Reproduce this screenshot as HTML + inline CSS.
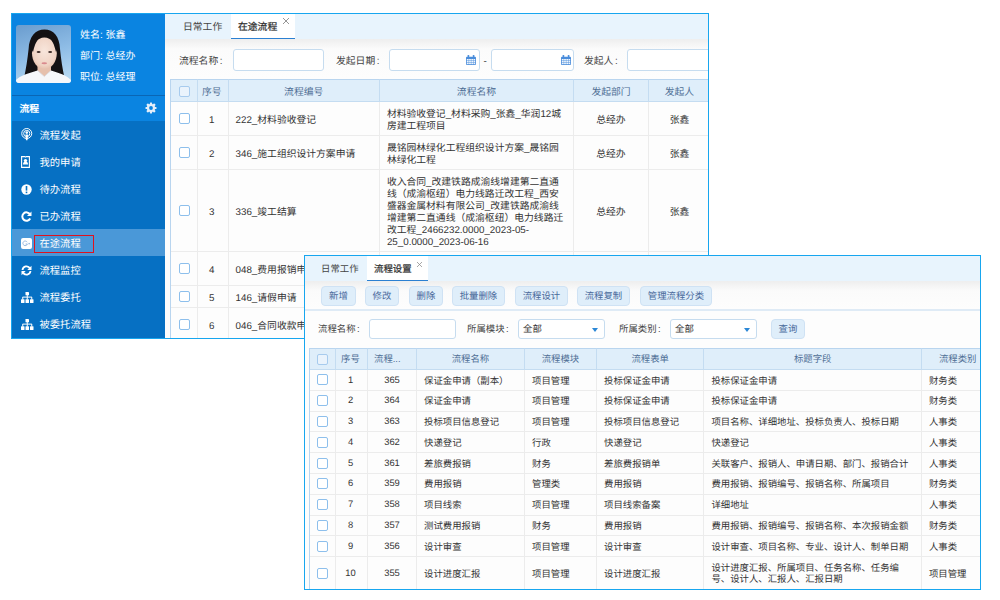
<!DOCTYPE html>
<html lang="zh-CN">
<head>
<meta charset="utf-8">
<style>
*{box-sizing:border-box;margin:0;padding:0}
html,body{width:1000px;height:600px;overflow:hidden;background:#fff;font-family:"Liberation Sans",sans-serif;color:#333;text-rendering:geometricPrecision}
.abs{position:absolute}
/* frame 1 */
#f1{position:absolute;left:11px;top:13px;width:698px;height:326px;border:1px solid #17a6ef;overflow:hidden;background:#fafafa}
#side{position:absolute;left:0;top:0;width:153px;height:324px;background:#0670c3;color:#fff}
#prof{position:absolute;left:0;top:0;width:153px;height:82px;background:#0a84e1;border-bottom:1px solid #0a66b5}
#photo{position:absolute;left:4px;top:11px;width:55px;height:58px;border-radius:3px;overflow:hidden}
.pl{position:absolute;left:68px;font-size:10px;line-height:12px;color:#fff;white-space:nowrap}
#shd{position:absolute;left:0;top:82px;width:153px;height:25px;background:#0a84e1}
#shd .t{position:absolute;left:7.5px;top:8px;font-size:9.8px;line-height:12px;font-weight:bold}
.mi{position:absolute;left:0;width:153px;height:27px;font-size:10px;line-height:12px;white-space:nowrap}
.mi .tx{position:absolute;left:27.5px;top:10px;font-size:10.3px}
.mi .ic{position:absolute;left:9px;top:9px;width:11px;height:11px}
.mi.on{background:#4a98d8}
/* window 1 content */
#w1 .lbl,#w1 table{font-size:9.8px}
#w1 .lbl{margin-top:1px}
#w1{position:absolute;left:153px;top:0;width:545px;height:324px;background:#fdfdfd}
.tabbar{position:absolute;left:0;top:0;width:100%;height:25px;background:#e8f4fd}
.tab{position:absolute;top:0;height:25px;font-size:9.8px;line-height:12px;white-space:nowrap;color:#444}
.tab.on{background:#fff;border-bottom:2px solid #2b80d2;color:#1a1a1a;height:26px;-webkit-text-stroke:.25px #444}
.tab .x{position:absolute;top:4px;width:6px;height:6px}
.srch{position:absolute;left:0;top:25px;width:100%;height:40px;background:linear-gradient(#eeeeee,#fbfbfb 10px,#fdfdfd)}
.lbl{position:absolute;font-size:10px;line-height:12px;color:#444;white-space:nowrap}
.inp{position:absolute;background:#fff;border:1px solid #c6dcef;border-radius:3px}
table{border-collapse:separate;border-spacing:0;table-layout:fixed;position:absolute;font-size:10px;line-height:12px;color:#333;border-left:1px solid #b9d5ef}
th{background:#dfeefa;color:#4f6f95;font-weight:normal;border-right:1px solid #c4dcf1;border-top:1px solid #b9d5ef;border-bottom:1px solid #c4dcf1;text-align:center;white-space:nowrap;overflow:hidden;padding:0}
td{border-right:1px solid #ececec;border-bottom:1px solid #ececec;background:#fdfdfd;text-align:center;padding:0 7px;overflow:hidden;white-space:nowrap}
td.l{text-align:left}
td:first-child,th:first-child{padding:0}
.ck{display:block;margin:0 auto;width:11px;height:11px;border:1px solid #8dbfec;border-radius:2px;background:#fff}
th .ck{border-color:#a7cbee;background:#eaf3fc}
/* window 2 */
#f2 .lbl,#f2 .btn,#f2 .sel,#f2 table,#f2 .tab{font-size:9.4px}
#f2 table{line-height:10.8px}
#t1 td{padding-top:5px}#t1 th{padding-top:4px}#t2 td{padding-top:2px}#t2 th{padding-top:1px}
#t1 td:first-child,#t2 td:first-child,#t1 th:first-child,#t2 th:first-child{padding:0}
#t1 th:first-child{padding-top:2px}
#t1 td:nth-child(2),#t2 td:nth-child(2){padding-left:0;padding-right:2px}#t2 td:nth-child(2),#t2 td:nth-child(3){padding-top:0}#t1 th:nth-child(2),#t2 th:nth-child(2){padding-right:2px}
#f2{position:absolute;left:304px;top:255px;width:677px;height:335px;border:1px solid #17a6ef;overflow:hidden;background:#fdfdfd}
.btn{position:absolute;top:30px;height:20px;background:#dfeefa;border:1px solid #cfe2f4;border-radius:4px;color:#48699a;font-size:10px;line-height:18px;text-align:center;white-space:nowrap}
.sel{position:absolute;background:#fff;border:1px solid #c6dcef;border-radius:3px;font-size:10px;line-height:18px;padding-left:4px;color:#333}
.sel:after{content:"";position:absolute;right:6px;top:7.5px;border-left:3.5px solid transparent;border-right:3.5px solid transparent;border-top:4px solid #2b87d6}
</style>
</head>
<body>
<div id="f1">
  <div id="side">
    <div id="prof">
      <div id="photo">
        <svg width="55" height="58" viewBox="0 0 55 58">
          <defs><linearGradient id="pg" x1="0.2" y1="0" x2="0.5" y2="1"><stop offset="0" stop-color="#6d9fd0"/><stop offset="0.55" stop-color="#8fbde6"/><stop offset="1" stop-color="#b3d6f1"/></linearGradient>
          <radialGradient id="fg" cx="0.5" cy="0.42" r="0.62"><stop offset="0" stop-color="#f8e6dc"/><stop offset="0.75" stop-color="#f0d3c4"/><stop offset="1" stop-color="#e2baa6"/></radialGradient></defs>
          <rect width="55" height="58" fill="url(#pg)"/>
          <path d="M8 53 C10 44 11.5 34 12.6 24 C13.2 11.5 19.5 4.5 28.5 4.5 C37.5 4.5 43.6 11.5 44 24 C45 34 46.5 44 48.5 53 Z" fill="#141113"/>
          <rect x="21.5" y="36" width="13.5" height="17" fill="#e6c0ad"/>
          <ellipse cx="28.4" cy="28.3" rx="12.4" ry="15.8" fill="url(#fg)"/>
          <path d="M15.2 24 C15 14 20 8.5 28.5 8.2 C24.5 10.5 19.5 15 17 27 Z" fill="#141113"/>
          <path d="M41.6 24 C41.8 14 37 8.5 28.5 8.2 C32.5 10.5 37.5 15 40 27 Z" fill="#141113"/>
          <ellipse cx="22.6" cy="27" rx="2" ry="1.1" fill="#3e2d29"/>
          <ellipse cx="34.2" cy="27" rx="2" ry="1.1" fill="#3e2d29"/>
          <ellipse cx="28.3" cy="38.2" rx="2.8" ry="1" fill="#d98a8e"/>
          <path d="M0 58 L0 55 C4 50.5 13 48 21.5 45.5 L28.3 51.5 L35 45.5 C43.5 48 51 50.5 55 55 L55 58 Z" fill="#f6f7fa"/>
          <path d="M21.5 45.5 L28.3 51.5 L35 45.5" fill="none" stroke="#d9dae2" stroke-width="0.8"/>
        </svg>
      </div>
      <div class="pl" style="top:16px">姓名: 张鑫</div>
      <div class="pl" style="top:37px">部门: 总经办</div>
      <div class="pl" style="top:58px">职位: 总经理</div>
    </div>
    <div id="shd"><div class="t">流程</div>
      <svg class="abs" style="left:133px;top:6px" width="12" height="12" viewBox="0 0 12 12"><g fill="#e3eefa"><circle cx="6" cy="6" r="4.1"/><rect x="4.9" y=".5" width="2.2" height="11" rx=".4"/><rect x="4.9" y=".5" width="2.2" height="11" rx=".4" transform="rotate(45 6 6)"/><rect x="4.9" y=".5" width="2.2" height="11" rx=".4" transform="rotate(90 6 6)"/><rect x="4.9" y=".5" width="2.2" height="11" rx=".4" transform="rotate(135 6 6)"/></g><circle cx="6" cy="6" r="1.9" fill="#0a84e1"/></svg>
    </div>
    <div class="mi" style="top:107px"><svg class="ic" style="width:11.5px;height:12.5px;top:7.3px" viewBox="0 0 11.5 12.5"><circle cx="5.75" cy="5.5" r="5" fill="none" stroke="#fff" stroke-width="1"/><circle cx="5.75" cy="5.5" r="3.1" fill="none" stroke="#fff" stroke-width="1"/><circle cx="5.75" cy="4.6" r="1.3" fill="#fff"/><path d="M4.4 6.5 H7.1 L6.5 12.3 H5 Z" fill="#fff"/></svg><span class="tx">流程发起</span></div>
    <div class="mi" style="top:134px"><svg class="ic" style="width:9px;height:12px;top:7.5px" viewBox="0 0 9 12"><path d="M.6 .6 H3.8 L4.5 1.1 L5.2 .6 H8.4 V11.4 H.6 Z" fill="none" stroke="#fff" stroke-width="1.1"/><circle cx="4.5" cy="4.6" r="1.7" fill="#fff"/><path d="M2 8.6 C2 6.3 3 5.6 4.5 5.6 C6 5.6 7 6.3 7 8.6 Z" fill="#fff"/></svg><span class="tx">我的申请</span></div>
    <div class="mi" style="top:161px"><svg class="ic" viewBox="0 0 11 11"><circle cx="5.5" cy="5.5" r="5.2" fill="#fff"/><rect x="4.7" y="2" width="1.6" height="4.6" fill="#0670c3"/><rect x="4.7" y="7.6" width="1.6" height="1.6" fill="#0670c3"/></svg><span class="tx">待办流程</span></div>
    <div class="mi" style="top:188px"><svg class="ic" viewBox="0 0 11 11"><path d="M9 3.2 A4.2 4.2 0 1 0 9.2 7.6" fill="none" stroke="#fff" stroke-width="2"/><path d="M10.5 0.5 L10.5 5 L6 5Z" fill="#fff"/></svg><span class="tx">已办流程</span></div>
    <div class="mi on" style="top:215px"><svg class="ic" style="width:11px;height:11px;top:9px" viewBox="0 0 11 11"><rect x="0" y="0" width="11" height="11" rx="2" fill="#fff"/><path d="M6.2 4.2 A2.3 2.3 0 1 0 6.4 6 H4.6" fill="none" stroke="#8fb3dc" stroke-width=".9"/><rect x="7.5" y="5.1" width="1.4" height="1" fill="#9ab9de"/><rect x="7.7" y="4.9" width="1" height="1.4" fill="#9ab9de"/></svg><span class="tx">在途流程</span>
      <div class="abs" style="left:22px;top:5.5px;width:60px;height:18px;border:1px solid #e0121e"></div></div>
    <div class="mi" style="top:242px"><svg class="ic" viewBox="0 0 11 11"><path d="M1.5 5 A4 4 0 0 1 9 3.5" fill="none" stroke="#fff" stroke-width="1.8"/><path d="M10.5 .8 L10.5 5 L6.3 5Z" fill="#fff"/><path d="M9.5 6 A4 4 0 0 1 2 7.5" fill="none" stroke="#fff" stroke-width="1.8"/><path d="M.5 10.2 L.5 6 L4.7 6Z" fill="#fff"/></svg><span class="tx">流程监控</span></div>
    <div class="mi" style="top:269px"><svg class="ic" style="width:12.5px;height:11px;top:9px" viewBox="0 0 12.5 11"><rect x="4.5" y="0" width="3.5" height="3.3" rx=".4" fill="#fff"/><rect x="1.6" y="4.6" width="9.3" height="1" fill="#fff"/><rect x="5.75" y="3" width="1" height="2" fill="#fff"/><rect x="0" y="7.3" width="3.5" height="3.7" rx=".5" fill="#fff"/><rect x="4.5" y="7.3" width="3.5" height="3.7" rx=".5" fill="#fff"/><rect x="9" y="7.3" width="3.5" height="3.7" rx=".5" fill="#fff"/><rect x="1.25" y="5" width="1" height="2.5" fill="#fff"/><rect x="5.75" y="5" width="1" height="2.5" fill="#fff"/><rect x="10.25" y="5" width="1" height="2.5" fill="#fff"/></svg><span class="tx">流程委托</span></div>
    <div class="mi" style="top:296px"><svg class="ic" style="width:12.5px;height:11px;top:9px" viewBox="0 0 12.5 11"><rect x="4.5" y="0" width="3.5" height="3.3" rx=".4" fill="#fff"/><rect x="1.6" y="4.6" width="9.3" height="1" fill="#fff"/><rect x="5.75" y="3" width="1" height="2" fill="#fff"/><rect x="0" y="7.3" width="3.5" height="3.7" rx=".5" fill="#fff"/><rect x="4.5" y="7.3" width="3.5" height="3.7" rx=".5" fill="#fff"/><rect x="9" y="7.3" width="3.5" height="3.7" rx=".5" fill="#fff"/><rect x="1.25" y="5" width="1" height="2.5" fill="#fff"/><rect x="5.75" y="5" width="1" height="2.5" fill="#fff"/><rect x="10.25" y="5" width="1" height="2.5" fill="#fff"/></svg><span class="tx">被委托流程</span></div>
  </div>
  <div id="w1">
    <div class="tabbar">
      <div class="tab" style="left:0;width:66px"><span class="abs" style="left:18px;top:8px">日常工作</span></div>
      <div class="tab on" style="left:66px;width:64px"><span class="abs" style="left:7px;top:8px">在途流程</span><span class="x" style="left:52px"><svg viewBox="0 0 6 6" width="6" height="6" style="display:block"><path d="M0 0L6 6M6 0L0 6" stroke="#8a8a8a" stroke-width=".9"/></svg></span></div>
    </div>
    <div class="srch"></div>
    <div class="lbl" style="left:14px;top:41px">流程名称<span style="margin-left:1.5px">:</span></div>
    <div class="inp" style="left:68px;top:35px;width:91px;height:22px"></div>
    <div class="lbl" style="left:171px;top:41px">发起日期<span style="margin-left:1.5px">:</span></div>
    <div class="inp" style="left:224px;top:35px;width:91px;height:22px"></div>
<svg class="abs" style="left:301px;top:41px" width="10" height="10" viewBox="0 0 10 10"><rect x="0" y="1.8" width="10" height="8.2" rx="1" fill="#4a8ddb"/><rect x="1.6" y="0" width="1.6" height="3.2" rx=".6" fill="#4a8ddb"/><rect x="6.8" y="0" width="1.6" height="3.2" rx=".6" fill="#4a8ddb"/><g fill="#eef5fd"><rect x=".8" y="4" width="1.9" height="1.5"/><rect x="3.1" y="4" width="1.8" height="1.5"/><rect x="5.3" y="4" width="1.8" height="1.5"/><rect x="7.5" y="4" width="1.7" height="1.5"/><rect x=".8" y="5.9" width="1.9" height="1.5"/><rect x="3.1" y="5.9" width="1.8" height="1.5"/><rect x="5.3" y="5.9" width="1.8" height="1.5"/><rect x="7.5" y="5.9" width="1.7" height="1.5"/><rect x=".8" y="7.8" width="1.9" height="1.4"/><rect x="3.1" y="7.8" width="1.8" height="1.4"/><rect x="5.3" y="7.8" width="1.8" height="1.4"/><rect x="7.5" y="7.8" width="1.7" height="1.4"/></g></svg>
    <div class="lbl" style="left:318.5px;top:41px">-</div>
    <div class="inp" style="left:326px;top:35px;width:83px;height:22px"></div>
<svg class="abs" style="left:396px;top:41px" width="10" height="10" viewBox="0 0 10 10"><rect x="0" y="1.8" width="10" height="8.2" rx="1" fill="#4a8ddb"/><rect x="1.6" y="0" width="1.6" height="3.2" rx=".6" fill="#4a8ddb"/><rect x="6.8" y="0" width="1.6" height="3.2" rx=".6" fill="#4a8ddb"/><g fill="#eef5fd"><rect x=".8" y="4" width="1.9" height="1.5"/><rect x="3.1" y="4" width="1.8" height="1.5"/><rect x="5.3" y="4" width="1.8" height="1.5"/><rect x="7.5" y="4" width="1.7" height="1.5"/><rect x=".8" y="5.9" width="1.9" height="1.5"/><rect x="3.1" y="5.9" width="1.8" height="1.5"/><rect x="5.3" y="5.9" width="1.8" height="1.5"/><rect x="7.5" y="5.9" width="1.7" height="1.5"/><rect x=".8" y="7.8" width="1.9" height="1.4"/><rect x="3.1" y="7.8" width="1.8" height="1.4"/><rect x="5.3" y="7.8" width="1.8" height="1.4"/><rect x="7.5" y="7.8" width="1.7" height="1.4"/></g></svg>
    <div class="lbl" style="left:419px;top:41px">发起人<span style="margin-left:1.5px">:</span></div>
    <div class="inp" style="left:462px;top:35px;width:120px;height:22px"></div>

    <table id="t1" style="left:5px;top:65px;width:540px">
      <colgroup><col style="width:27px"><col style="width:30.5px"><col style="width:151.4px"><col style="width:194.1px"><col style="width:75px"><col style="width:62px"></colgroup>
      <tr style="height:23px"><th><span class="ck"></span></th><th>序号</th><th>流程编号</th><th>流程名称</th><th>发起部门</th><th>发起人</th></tr>
      <tr style="height:34px"><td><span class="ck"></span></td><td>1</td><td class="l">222_材料验收登记</td><td class="l">材料验收登记_材料采购_张鑫_华润12城<br>房建工程项目</td><td>总经办</td><td>张鑫</td></tr>
      <tr style="height:34px"><td><span class="ck"></span></td><td>2</td><td class="l">346_施工组织设计方案申请</td><td class="l">晟铭园林绿化工程组织设计方案_晟铭园<br>林绿化工程</td><td>总经办</td><td>张鑫</td></tr>
      <tr style="height:82px"><td><span class="ck"></span></td><td>3</td><td class="l">336_竣工结算</td><td class="l">收入合同_改建铁路成渝线增建第二直通<br>线（成渝枢纽）电力线路迁改工程_西安<br>盛器金属材料有限公司_改建铁路成渝线<br>增建第二直通线（成渝枢纽）电力线路迁<br>改工程_2466232.0000_2023-05-<br>25_0.0000_2023-06-16</td><td>总经办</td><td>张鑫</td></tr>
      <tr style="height:34px"><td><span class="ck"></span></td><td>4</td><td class="l">048_费用报销申请</td><td class="l">费用报销_2023<br>报销</td><td>总经办</td><td>张鑫</td></tr>
      <tr style="height:22px"><td><span class="ck"></span></td><td>5</td><td class="l">146_请假申请</td><td class="l">请假</td><td>总经办</td><td>张鑫</td></tr>
      <tr style="height:34px"><td><span class="ck"></span></td><td>6</td><td class="l">046_合同收款申请</td><td class="l">合同收款<br>收款</td><td>总经办</td><td>张鑫</td></tr>
    </table>
  </div>
</div>
<div id="f2">
    <div class="tabbar">
      <div class="tab" style="left:0;width:62px"><span class="abs" style="left:16px;top:7px">日常工作</span></div>
      <div class="tab on" style="left:62px;width:61px"><span class="abs" style="left:7px;top:7px">流程设置</span><span class="x" style="left:50px;top:5.5px"><svg viewBox="0 0 6 6" width="5" height="5" style="display:block"><path d="M0 0L6 6M6 0L0 6" stroke="#8a8a8a" stroke-width=".9"/></svg></span></div>
    </div>
    <div class="srch" style="top:25px;height:30px;background:linear-gradient(#eeeeee,#fbfbfb 10px,#fdfdfd);border-bottom:2px solid #dfebf6"></div>
    <div class="btn" style="left:16px;width:35px">新增</div>
    <div class="btn" style="left:60px;width:34px">修改</div>
    <div class="btn" style="left:104px;width:34px">删除</div>
    <div class="btn" style="left:147px;width:53px">批量删除</div>
    <div class="btn" style="left:210px;width:53px">流程设计</div>
    <div class="btn" style="left:272px;width:53px">流程复制</div>
    <div class="btn" style="left:335px;width:72px">管理流程分类</div>
    <div class="lbl" style="left:13px;top:67px">流程名称<span style="margin-left:1.5px">:</span></div>
    <div class="inp" style="left:64px;top:63px;width:87px;height:20px"></div>
    <div class="lbl" style="left:162px;top:67px">所属模块<span style="margin-left:1.5px">:</span></div>
    <div class="sel" style="left:213px;top:63px;width:87px;height:20px">全部</div>
    <div class="lbl" style="left:314px;top:67px">所属类别<span style="margin-left:1.5px">:</span></div>
    <div class="sel" style="left:365px;top:63px;width:87px;height:20px">全部</div>
    <div class="btn" style="left:466px;top:63px;width:34px;height:20px">查询</div>
    <table id="t2" style="left:4px;top:92px;width:684px">
      <colgroup><col style="width:26px"><col style="width:32px"><col style="width:49px"><col style="width:108px"><col style="width:72px"><col style="width:107.4px"><col style="width:217.6px"><col style="width:72px"></colgroup>
      <tr style="height:22px"><th><span class="ck"></span></th><th>序号</th><th style="text-align:left;padding-left:6px">流程...</th><th>流程名称</th><th>流程模块</th><th>流程表单</th><th>标题字段</th><th style="text-align:left;padding-left:17px">流程类别</th></tr>
      <tr style="height:20.8px"><td><span class="ck"></span></td><td>1</td><td>365</td><td class="l">保证金申请（副本）</td><td class="l">项目管理</td><td class="l">投标保证金申请</td><td class="l">投标保证金申请</td><td class="l">财务类</td></tr>
      <tr style="height:20.8px"><td><span class="ck"></span></td><td>2</td><td>364</td><td class="l">保证金申请</td><td class="l">项目管理</td><td class="l">投标保证金申请</td><td class="l">投标保证金申请</td><td class="l">财务类</td></tr>
      <tr style="height:20.8px"><td><span class="ck"></span></td><td>3</td><td>363</td><td class="l">投标项目信息登记</td><td class="l">项目管理</td><td class="l">投标项目信息登记</td><td class="l">项目名称、详细地址、投标负责人、投标日期</td><td class="l">人事类</td></tr>
      <tr style="height:20.8px"><td><span class="ck"></span></td><td>4</td><td>362</td><td class="l">快递登记</td><td class="l">行政</td><td class="l">快递登记</td><td class="l">快递登记</td><td class="l">人事类</td></tr>
      <tr style="height:20.8px"><td><span class="ck"></span></td><td>5</td><td>361</td><td class="l">差旅费报销</td><td class="l">财务</td><td class="l">差旅费报销单</td><td class="l">关联客户、报销人、申请日期、部门、报销合计</td><td class="l">人事类</td></tr>
      <tr style="height:20.8px"><td><span class="ck"></span></td><td>6</td><td>359</td><td class="l">费用报销</td><td class="l">管理类</td><td class="l">费用报销</td><td class="l">费用报销、报销编号、报销名称、所属项目</td><td class="l">财务类</td></tr>
      <tr style="height:20.8px"><td><span class="ck"></span></td><td>7</td><td>358</td><td class="l">项目线索</td><td class="l">项目管理</td><td class="l">项目线索备案</td><td class="l">详细地址</td><td class="l">人事类</td></tr>
      <tr style="height:20.8px"><td><span class="ck"></span></td><td>8</td><td>357</td><td class="l">测试费用报销</td><td class="l">财务</td><td class="l">费用报销</td><td class="l">费用报销、报销编号、报销名称、本次报销金额</td><td class="l">财务类</td></tr>
      <tr style="height:20.8px"><td><span class="ck"></span></td><td>9</td><td>356</td><td class="l">设计审查</td><td class="l">项目管理</td><td class="l">设计审查</td><td class="l">设计审查、项目名称、专业、设计人、制单日期</td><td class="l">人事类</td></tr>
      <tr style="height:33px"><td><span class="ck"></span></td><td>10</td><td>355</td><td class="l">设计进度汇报</td><td class="l">项目管理</td><td class="l">设计进度汇报</td><td class="l">设计进度汇报、所属项目、任务名称、任务编<br>号、设计人、汇报人、汇报日期</td><td class="l">项目管理</td></tr>
    </table>
</div>
</body>
</html>
